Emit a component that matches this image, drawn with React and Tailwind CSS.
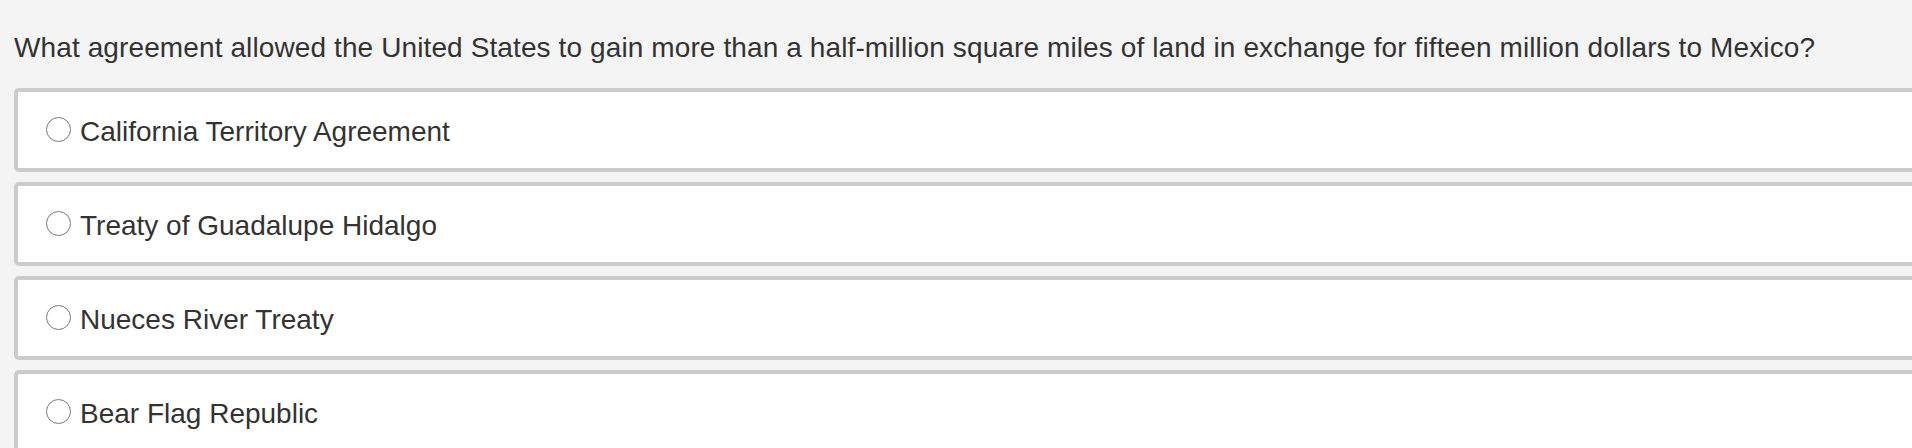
export default function App() {
  const question =
    'What agreement allowed the United States to gain more than a half-million square miles of land in exchange for fifteen million dollars to Mexico?'

  const options = [
    'California Territory Agreement',
    'Treaty of Guadalupe Hidalgo',
    'Nueces River Treaty',
    'Bear Flag Republic',
  ]

  return (
    <div className="h-[448px] overflow-hidden bg-[#f4f4f4] font-['Liberation_Sans',Arial,sans-serif] text-[#333]">
      <p className="pt-[31px] pl-[14px] text-[28px] leading-[34px] tracking-[0.11px] whitespace-nowrap">
        {question}
      </p>

      <div className="mt-[23px] ml-[14px] w-[1920px] flex flex-col gap-[10px]">
        {options.map((opt) => (
          <label
            key={opt}
            className="h-[84px] flex items-start pl-[28px] pt-[23px] bg-white border-4 border-[#cbcbcb] rounded-[5px]"
          >
            <span className="mt-[1.5px] w-[25px] h-[25px] shrink-0 rounded-full border-[1.75px] border-[#7a7a7a] bg-white"></span>
            <span className="ml-[9px] text-[28px] leading-[34px] whitespace-nowrap">{opt}</span>
          </label>
        ))}
      </div>
    </div>
  )
}
